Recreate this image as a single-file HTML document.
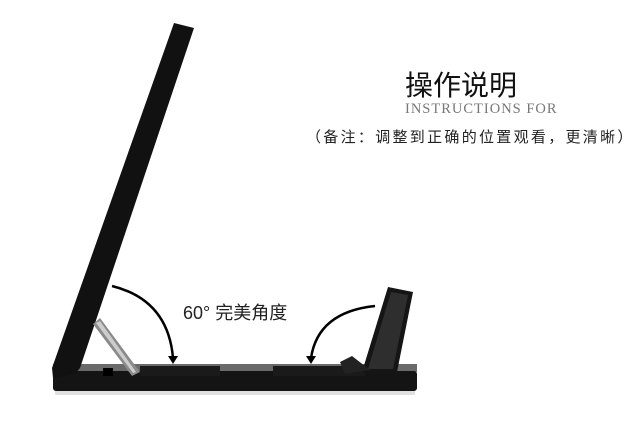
<!DOCTYPE html>
<html><head><meta charset="utf-8"><style>
body{margin:0;width:640px;height:440px;background:#fff;overflow:hidden;position:relative;font-family:"Liberation Sans","Noto Sans CJK SC",sans-serif}
.t{position:absolute;white-space:nowrap}
</style></head><body>
<svg width="640" height="440" style="position:absolute;left:0;top:0">
  <rect x="53" y="364" width="364" height="8" fill="#6a6a6a"/>
  <rect x="53" y="371" width="364" height="20" rx="3" fill="#141414"/>
  <rect x="55" y="391" width="360" height="4" fill="#e0e0e0"/>
  <rect x="140" y="366" width="80" height="10" fill="#1a1a1a"/>
  <rect x="273" y="366" width="92" height="10" fill="#1a1a1a"/>
  <rect x="103" y="368" width="10" height="8" fill="#000"/>
  <!-- panel -->
  <polygon points="174,23 194,28 80,368 75,374 53,378 52,368" fill="#111"/>
  <!-- small stand -->
  <polygon points="93,324 100,318 140,372 132,376" fill="#8a8a8a"/>
  <polygon points="96,323 100,321 136,372 133,373" fill="#ccc"/>
  <!-- phone right -->
  <polygon points="388,287 413,292 397,372 362,372" fill="#151515"/>
  <polygon points="391,292 408,295 393,369 368,369" fill="#2e2e2e"/>
  <polygon points="340,362 352,356 370,370 345,374" fill="#222"/>
  <!-- arrows -->
  <path d="M112,286 Q168,300 173,358" stroke="#000" stroke-width="2.5" fill="none"/>
  <polygon points="168,356 178,356 173,364" fill="#000"/>
  <path d="M375,306 Q318,312 311,358" stroke="#000" stroke-width="2.5" fill="none"/>
  <polygon points="306,356 316,356 311,364" fill="#000"/>
</svg>
<div class="t" style="left:183px;top:299px;font-size:18px;color:#222">60° 完美角度</div>
<div class="t" style="left:405px;top:64px;font-size:28px;color:#111">操作说明</div>
<div class="t" style="left:405px;top:101px;font-size:14.5px;color:#777;font-family:'Liberation Serif',serif;letter-spacing:1px">INSTRUCTIONS FOR</div>
<div class="t" style="left:306px;top:126px;font-size:15px;color:#222;letter-spacing:2.3px">（备注：调整到正确的位置观看，更清晰）</div>
</body></html>
